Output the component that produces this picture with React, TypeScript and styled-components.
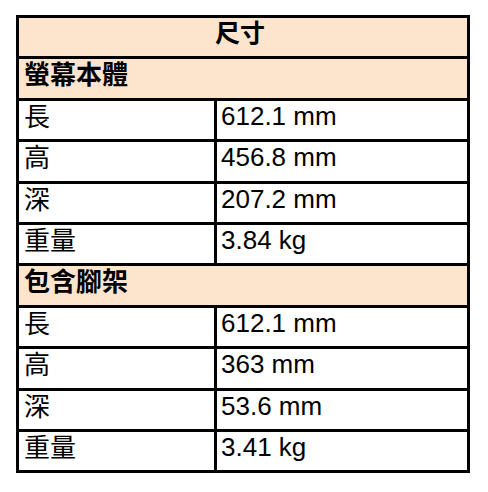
import React from "react";
import styled, { createGlobalStyle } from "styled-components";

const GlobalStyle = createGlobalStyle`
  body {
    margin: 0;
    background: #ffffff;
    font-family: "Liberation Sans", "Noto Sans CJK TC", Arial, sans-serif;
    color: #000000;
  }
`;

const Page = styled.div`
  padding: 15px 0 0 16px;
`;

const SpecTable = styled.table`
  width: 454px;
  border-collapse: separate;
  border-spacing: 0;
  border: 3px solid #000000;
  table-layout: fixed;
`;

const Column = styled.col<{ $width: number }>`
  width: ${(p) => p.$width}px;
`;

const Cell = styled.td<{ $first?: boolean }>`
  box-sizing: border-box;
  height: ${(p) => (p.$first ? "38.4px" : "41.4px")};
  border-top: ${(p) => (p.$first ? "none" : "3px solid #000000")};
  padding: 1px 5px 0;
  vertical-align: top;
  line-height: 28px;
  white-space: nowrap;
`;

const TitleCell = styled(Cell)`
  background: #fde5cd;
  text-align: center;
  font-weight: bold;
  font-size: 25px;
  padding-right: 11px;
`;

const SectionCell = styled(Cell)`
  background: #fde5cd;
  font-weight: bold;
  font-size: 26px;
  padding-top: 2px;
`;

const LabelCell = styled(Cell)`
  font-size: 26px;
  padding-top: 2px;
`;

const ValueCell = styled(Cell)`
  border-left: 3px solid #000000;
  font-size: 26px;
  padding-left: 4px;
`;

type Spec = { label: string; value: string };
type Section = { title: string; rows: Spec[] };

const sections: Section[] = [
  {
    title: "螢幕本體",
    rows: [
      { label: "長", value: "612.1 mm" },
      { label: "高", value: "456.8 mm" },
      { label: "深", value: "207.2 mm" },
      { label: "重量", value: "3.84 kg" },
    ],
  },
  {
    title: "包含腳架",
    rows: [
      { label: "長", value: "612.1 mm" },
      { label: "高", value: "363 mm" },
      { label: "深", value: "53.6 mm" },
      { label: "重量", value: "3.41 kg" },
    ],
  },
];

const App: React.FC = () => {
  return (
    <Page>
      <GlobalStyle />
      <SpecTable>
        <colgroup>
          <Column $width={195} />
          <Column $width={253} />
        </colgroup>
        <tbody>
          <tr>
            <TitleCell $first colSpan={2}>
              尺寸
            </TitleCell>
          </tr>
          {sections.map((section) => (
            <React.Fragment key={section.title}>
              <tr>
                <SectionCell colSpan={2}>{section.title}</SectionCell>
              </tr>
              {section.rows.map((row) => (
                <tr key={section.title + row.label}>
                  <LabelCell>{row.label}</LabelCell>
                  <ValueCell>{row.value}</ValueCell>
                </tr>
              ))}
            </React.Fragment>
          ))}
        </tbody>
      </SpecTable>
    </Page>
  );
};

export default App;
